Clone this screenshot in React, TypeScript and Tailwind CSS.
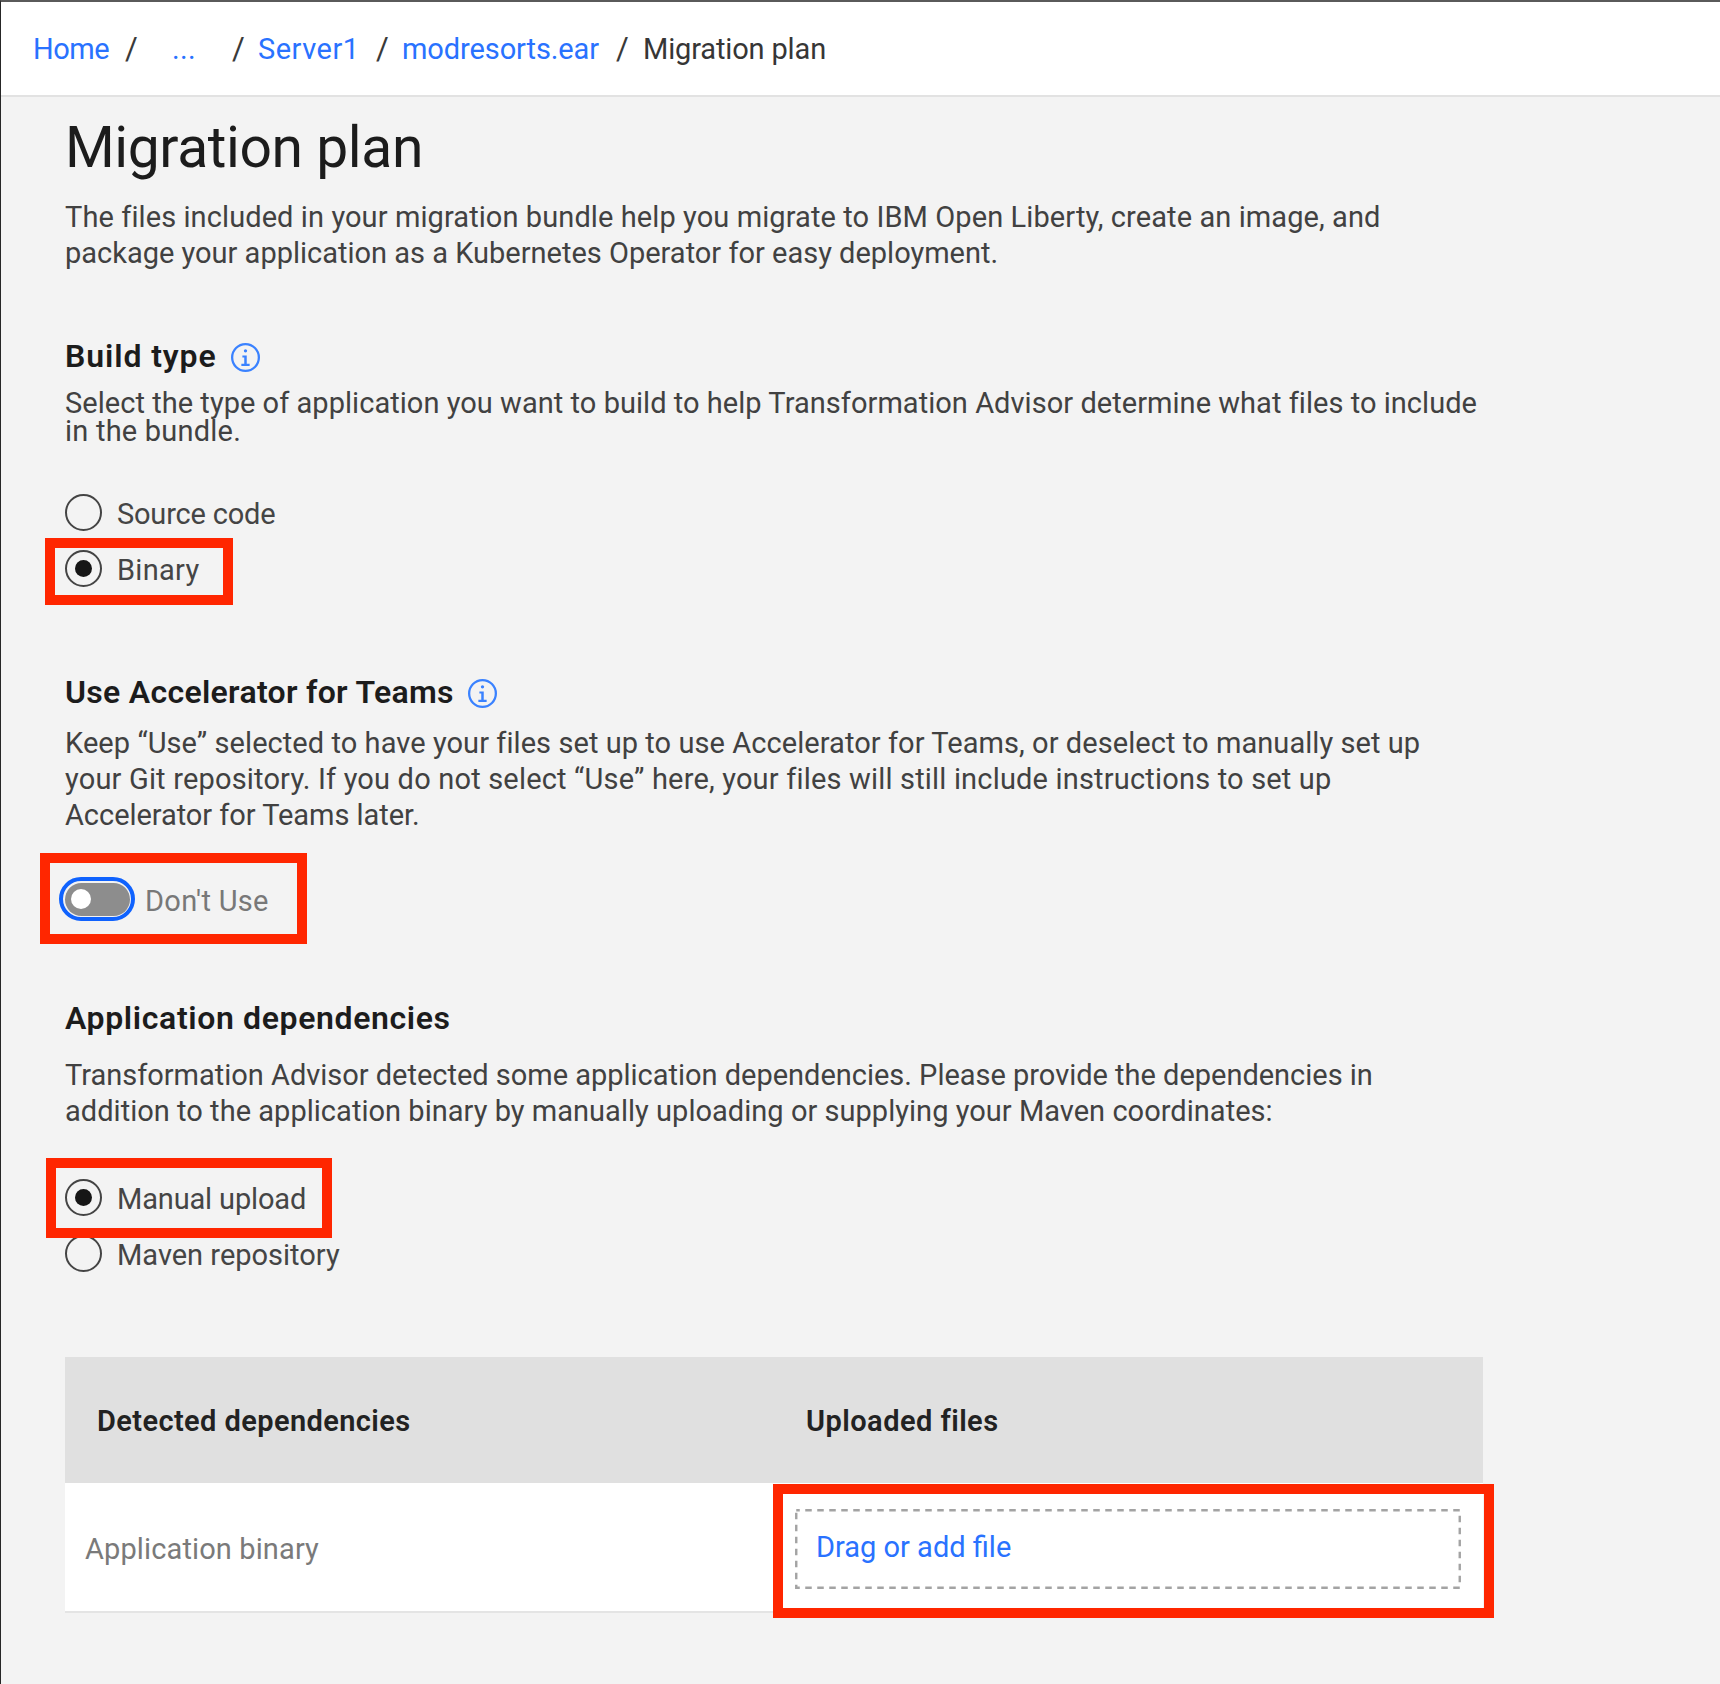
import type { ReactNode } from "react";

function InfoIcon() {
  return (
    <svg viewBox="2 2 28 28" className="mt-[2px] h-[29px] w-[29px]" fill="none">
      <circle cx="16" cy="16" r="12.9" stroke="#3a82ff" strokeWidth="2.2" />
      <path
        d="M17.2 22V14H13V16H14.8V22H12V24.2H20V22ZM16 8a1.6 1.6 0 1 0 1.6 1.6A1.6 1.6 0 0 0 16 8Z"
        fill="#3a82ff"
      />
    </svg>
  );
}

function Highlight({ className }: { className: string }) {
  return (
    <div
      className={`pointer-events-none absolute z-10 border-[10px] border-[#ff2600] ${className}`}
    />
  );
}

function DashedOutline() {
  return (
    <svg className="absolute inset-0 h-full w-full" fill="none">
      <rect
        x="1.25"
        y="1.25"
        width="663.5"
        height="77.5"
        stroke="#a3a3a3"
        strokeWidth="2.4"
        strokeDasharray="6.5 5.5"
        strokeDashoffset="3"
      />
    </svg>
  );
}

function Radio({
  checked,
  label,
  tracking = "",
  children,
}: {
  checked?: boolean;
  label: string;
  tracking?: string;
  children?: ReactNode;
}) {
  return (
    <div className="relative flex h-[56px] items-center gap-[15px]">
      <span className="flex h-[37px] w-[37px] items-center justify-center rounded-full border-2 border-[#444444]">
        {checked && <span className="h-[17px] w-[17px] rounded-full bg-[#161616]" />}
      </span>
      <span className={`mt-[4px] leading-[36px] text-[#454545] ${tracking}`}>{label}</span>
      {children}
    </div>
  );
}

function Heading({
  children,
  tracking,
  info,
}: {
  children: string;
  tracking: string;
  info?: boolean;
}) {
  return (
    <div className="flex h-[40px] items-center gap-[14px]">
      <h2 className={`text-[32px] font-semibold leading-[40px] text-[#1c1c1c] ${tracking}`}>
        {children}
      </h2>
      {info && <InfoIcon />}
    </div>
  );
}

function Slash({ className }: { className: string }) {
  return <span className={`text-[#3a3a3a] ${className}`}>/</span>;
}

export default function App() {
  return (
    <div className="min-h-[1684px] w-[1720px] overflow-hidden whitespace-nowrap border-l border-t-2 border-l-[#262626] border-t-[#5a5a5a] bg-[#f3f3f3] font-['Roboto',sans-serif] text-[29px] leading-[36px] text-[#414141]">
      <nav className="flex h-[95px] items-center border-b-2 border-[#e2e2e2] bg-white pl-[32px] text-[#2972ff]">
        <a className="w-[92px] tracking-[-0.5px]">Home</a>
        <Slash className="w-[47px] text-[31px]" />
        <a className="w-[60px] tracking-[0.4px]">...</a>
        <Slash className="w-[26px] text-[31px]" />
        <a className="w-[118px] tracking-[0.5px]">Server1</a>
        <Slash className="w-[26px] text-[31px]" />
        <a className="w-[214px] tracking-[-0.1px]">modresorts.ear</a>
        <Slash className="w-[27px] text-[31px]" />
        <span className="tracking-[-0.15px] text-[#363636]">Migration plan</span>
      </nav>

      <main className="pl-[64px] pt-[19px]">
        <h1 className="text-[57px] leading-[64px] tracking-[-0.42px] text-[#1c1c1c]">
          Migration plan
        </h1>
        <div className="mt-[19px]">
          <p className="tracking-[0.09px]">
            The files included in your migration bundle help you migrate to IBM Open Liberty,
            create an image, and
          </p>
          <p>package your application as a Kubernetes Operator for easy deployment.</p>
        </div>

        <section className="mt-[65px]">
          <Heading tracking="tracking-[0.9px]" info>
            Build type
          </Heading>
          <div className="mt-[13px] leading-[28px]">
            <p className="tracking-[0.04px]">
              Select the type of application you want to build to help Transformation Advisor
              determine what files to include
            </p>
            <p className="tracking-[0.22px]">in the bundle.</p>
          </div>
          <div className="mt-[39px]">
            <Radio label="Source code" tracking="tracking-[-0.2px]" />
            <Radio label="Binary" tracking="tracking-[0.3px]" checked>
              <Highlight className="left-[-20px] top-[-2px] h-[67px] w-[188px]" />
            </Radio>
          </div>
        </section>

        <section className="mt-[76px]">
          <Heading tracking="tracking-[0.3px]" info>
            Use Accelerator for Teams
          </Heading>
          <div className="mt-[13px]">
            <p className="tracking-[0.065px]">
              Keep “Use” selected to have your files set up to use Accelerator for Teams, or
              deselect to manually set up
            </p>
            <p className="tracking-[0.18px]">
              your Git repository. If you do not select “Use” here, your files will still include
              instructions to set up
            </p>
            <p className="tracking-[-0.05px]">Accelerator for Teams later.</p>
          </div>
          <div className="relative mt-[44px] flex h-[44px] items-center">
            <span className="-ml-[6px] flex h-[44px] w-[76px] items-center justify-center rounded-full border-4 border-[#0f62fe]">
              <span className="flex h-[33px] w-[65px] items-center rounded-full bg-[#8d8d8d] pl-[6px]">
                <span className="h-[20px] w-[20px] rounded-full bg-white" />
              </span>
            </span>
            <span className="ml-[10px] mt-[3px] tracking-[0.3px] text-[#787878]">Don't Use</span>
            <Highlight className="left-[-25px] top-[-24px] h-[91px] w-[267px]" />
          </div>
        </section>

        <section className="mt-[77px]">
          <Heading tracking="tracking-[0.63px]">Application dependencies</Heading>
          <div className="mt-[19px]">
            <p className="tracking-[-0.015px]">
              Transformation Advisor detected some application dependencies. Please provide the
              dependencies in
            </p>
            <p className="tracking-[0.03px]">
              addition to the application binary by manually uploading or supplying your Maven
              coordinates:
            </p>
          </div>
          <div className="mt-[40px]">
            <Radio label="Manual upload" tracking="tracking-[-0.15px]" checked>
              <Highlight className="left-[-19px] top-[-11px] h-[80px] w-[286px]" />
            </Radio>
            <Radio label="Maven repository" />
          </div>
        </section>

        <div className="mt-[76px] w-[1418px]">
          <div className="grid h-[126px] grid-cols-2 items-center bg-[#e0e0e0] pt-[2px] font-semibold text-[#222222]">
            <div className="pl-[32px] tracking-[0.4px]">Detected dependencies</div>
            <div className="pl-[32px] tracking-[0.45px]">Uploaded files</div>
          </div>
          <div className="relative grid h-[130px] grid-cols-2 items-center border-b-2 border-[#e4e4e4] bg-white">
            <div className="pl-[20px] pt-[3px] tracking-[0.12px] text-[#7a7a7a]">
              Application binary
            </div>
            <div className="relative ml-[21px] mr-[22px] mt-[3px] flex h-[80px] items-center pb-[4px] pl-[21px] text-[#2972ff]">
              <DashedOutline />
              Drag or add file
            </div>
            <Highlight className="left-[708px] top-px h-[134px] w-[721px]" />
          </div>
        </div>
      </main>
    </div>
  );
}
